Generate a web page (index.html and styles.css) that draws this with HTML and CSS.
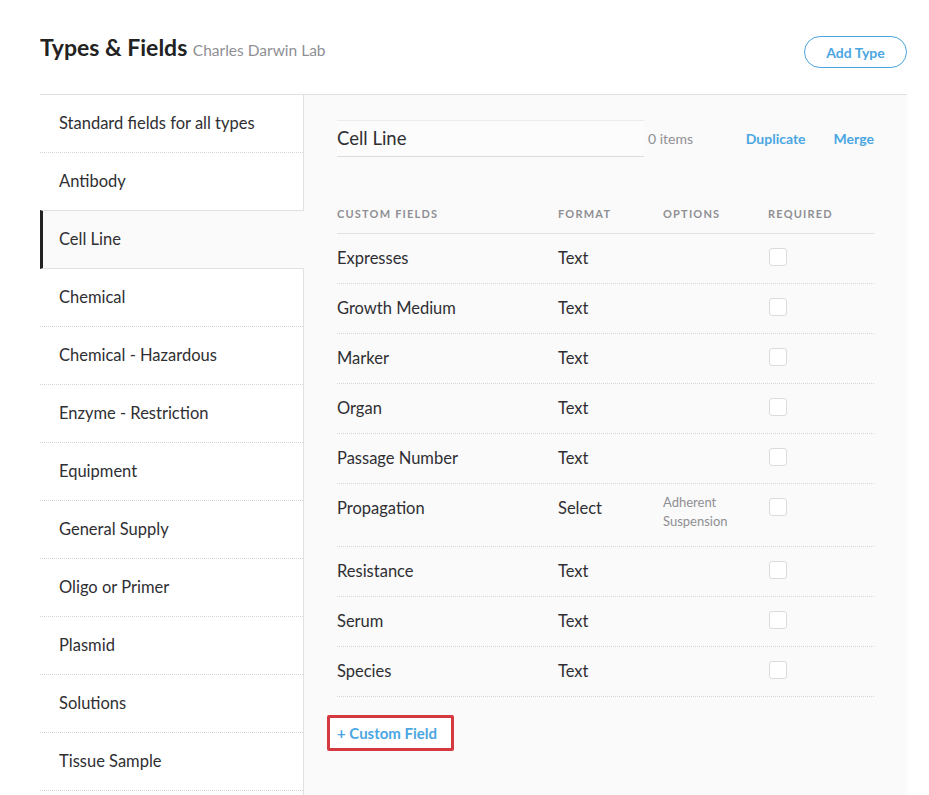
FILE: index.html
```html
<!DOCTYPE html>
<html lang="en">
<head>
    <meta charset="UTF-8">
    <meta name="viewport" content="width=device-width, initial-scale=1.0">
    <title>Types &amp; Fields</title>
    <link rel="stylesheet" href="styles.css">
</head>
<body>
    <div class="page-header">
        <h1>Types &amp; Fields <span class="lab-name">Charles Darwin Lab</span></h1>
        <button class="btn-outline">Add Type</button>
    </div>

    <div class="types-layout">
        <ul class="type-list">
            <li>Standard fields for all types</li>
            <li>Antibody</li>
            <li class="active">Cell Line</li>
            <li>Chemical</li>
            <li>Chemical - Hazardous</li>
            <li>Enzyme - Restriction</li>
            <li>Equipment</li>
            <li>General Supply</li>
            <li>Oligo or Primer</li>
            <li>Plasmid</li>
            <li>Solutions</li>
            <li>Tissue Sample</li>
        </ul>

        <div class="type-detail">
            <div class="name-row">
                <div class="name-input">Cell Line</div>
                <span class="item-count">0 items</span>
                <div class="name-actions">
                    <a href="#">Duplicate</a>
                    <a href="#">Merge</a>
                </div>
            </div>

            <div class="fields-table">
                <div class="field-row field-head">
                    <div>Custom Fields</div>
                    <div>Format</div>
                    <div>Options</div>
                    <div>Required</div>
                </div>
                <div class="field-row">
                    <div>Expresses</div><div>Text</div><div></div><div><span class="check"></span></div>
                </div>
                <div class="field-row">
                    <div>Growth Medium</div><div>Text</div><div></div><div><span class="check"></span></div>
                </div>
                <div class="field-row">
                    <div>Marker</div><div>Text</div><div></div><div><span class="check"></span></div>
                </div>
                <div class="field-row">
                    <div>Organ</div><div>Text</div><div></div><div><span class="check"></span></div>
                </div>
                <div class="field-row">
                    <div>Passage Number</div><div>Text</div><div></div><div><span class="check"></span></div>
                </div>
                <div class="field-row">
                    <div>Propagation</div><div>Select</div>
                    <div class="options">Adherent<br>Suspension</div>
                    <div><span class="check"></span></div>
                </div>
                <div class="field-row">
                    <div>Resistance</div><div>Text</div><div></div><div><span class="check"></span></div>
                </div>
                <div class="field-row">
                    <div>Serum</div><div>Text</div><div></div><div><span class="check"></span></div>
                </div>
                <div class="field-row">
                    <div>Species</div><div>Text</div><div></div><div><span class="check"></span></div>
                </div>
            </div>

            <button class="add-field">+ Custom Field</button>
        </div>
    </div>
</body>
</html>
```

FILE: styles.css
```css
:root {
    --text: #2f2f33;
    --muted: #8f8f94;
    --blue: #4ba6e1;
    --line: #e2e2e2;
    --dots: #d6d6d6;
    --panel: #fafafa;
}

body {
    margin: 0;
    font-family: 'Lato', 'Liberation Sans', sans-serif;
    color: var(--text);
    background: #fff;
}

/* Header */
.page-header {
    display: flex;
    justify-content: space-between;
    align-items: center;
    height: 32px;
    padding: 36px 22px 26px 40px;
}

.page-header h1 {
    margin: 0 0 8px;
    font-size: 23px;
    line-height: 24px;
    font-weight: 700;
    color: #222;
}

.lab-name {
    font-size: 15.5px;
    font-weight: 400;
    color: var(--muted);
}

.btn-outline {
    height: 32px;
    width: 103px;
    border: 1px solid var(--blue);
    border-radius: 16px;
    background: #fff;
    color: var(--blue);
    font-family: inherit;
    font-size: 14px;
    font-weight: 700;
    cursor: pointer;
}

/* Two columns */
.types-layout {
    display: flex;
    margin: 0 22px 0 40px;
    border-top: 1px solid var(--line);
    min-height: 720px;
}

.type-list {
    list-style: none;
    margin: 0;
    padding: 0;
    width: 263px;
    border-right: 1px solid var(--line);
}

.type-list li {
    height: 57px;
    line-height: 56px;
    padding-left: 19px;
    font-size: 16.5px;
    border-bottom: 1px dotted var(--dots);
}

.type-list li.active {
    background: var(--panel);
    border-left: 3px solid #222;
    padding-left: 16px;
    margin: -1px -1px 0 0;
    border-top: 1px solid var(--line);
    border-bottom: 1px solid var(--line);
}

.type-detail {
    flex: 1;
    background: var(--panel);
    padding: 25px 33px 40px;
}

/* Name row */
.name-row {
    display: flex;
    align-items: center;
}

.name-input {
    width: 307px;
    height: 35px;
    line-height: 35px;
    font-size: 18.5px;
    background: #fcfcfc;
    border-top: 1px solid #ececec;
    border-bottom: 1px solid #dcdcdc;
}

.item-count {
    margin-left: 4px;
    font-size: 14px;
    color: var(--muted);
}

.name-actions {
    margin-left: auto;
    display: flex;
    gap: 28px;
}

.name-actions a {
    color: var(--blue);
    font-size: 14px;
    font-weight: 700;
    text-decoration: none;
}

/* Fields table */
.fields-table {
    margin-top: 47px;
}

.field-row {
    display: grid;
    grid-template-columns: 221px 105px 105px 1fr;
    padding: 15px 0 15px;
    font-size: 16.5px;
    line-height: 19px;
    border-bottom: 1px dotted var(--dots);
}

.field-row.field-head {
    padding: 0 0 10px;
    font-size: 11px;
    font-weight: 700;
    letter-spacing: 1.2px;
    text-transform: uppercase;
    color: var(--muted);
    border-bottom: 1px solid var(--line);
}

.options {
    margin-top: -6px;
    font-size: 13px;
    color: var(--muted);
}

.check {
    display: block;
    width: 16px;
    height: 16px;
    margin: -1px 0 0 1px;
    border: 1px solid #dcdcdc;
    border-radius: 3px;
    background: #fff;
}

.add-field {
    margin: 18px 0 0 -10px;
    padding: 0 10px 0 7px;
    height: 36px;
    width: 127px;
    text-align: left;
    border: 3px solid #d4393f;
    border-radius: 2px;
    background: #fff;
    color: var(--blue);
    font-family: inherit;
    font-size: 15px;
    font-weight: 700;
    cursor: pointer;
}
```
